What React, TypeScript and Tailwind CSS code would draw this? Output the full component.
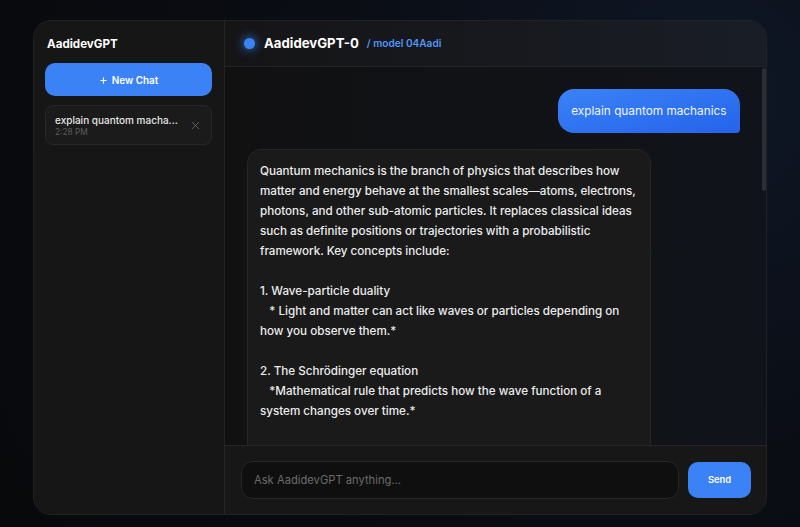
import { Plus, X } from 'lucide-react';

const reply = `Quantum mechanics is the branch of physics that describes how matter and energy behave at the smallest scales—atoms, electrons, photons, and other sub-atomic particles. It replaces classical ideas such as definite positions or trajectories with a probabilistic framework. Key concepts include:

1. Wave-particle duality
   * Light and matter can act like waves or particles depending on how you observe them.*

2. The Schrödinger equation
   *Mathematical rule that predicts how the wave function of a system changes over time.*`;

export default function App() {
  return (
    <div className="h-[527px] w-[800px] overflow-hidden bg-[radial-gradient(circle_at_88%_18%,#0f1726_0%,#0a0d14_45%,#08090b_100%)] pt-5 pl-[33px] font-['Inter',sans-serif]">
      <div className="flex h-[495px] w-[734px] overflow-hidden rounded-[18px] border border-[#212225] bg-[#151516]">
        <aside className="flex w-[191px] shrink-0 flex-col border-r border-[#232427] bg-[#161617] pt-[15px] pr-[12px] pl-[11px]">
          <h1 className="pl-[2px] text-[11.6px] leading-[16px] font-bold text-white">AadidevGPT</h1>
          <button className="mt-[11px] flex h-[33px] items-center justify-center gap-[4px] rounded-[10px] bg-[#3b82f6] pt-[1px] text-[9.9px] font-semibold text-white">
            <Plus size={9} strokeWidth={3} />
            New Chat
          </button>
          <div className="mt-[9px] flex h-[40px] items-center justify-between rounded-[8px] border border-[#27282b] bg-[#1b1b1c] pr-[9px] pl-[9px]">
            <div className="pt-[2px]">
              <p className="text-[10px] leading-[13px] font-medium text-[#e5e5e5]">explain quantom macha...</p>
              <p className="text-[8.3px] leading-[11px] text-[#5c5c5c]">2:28 PM</p>
            </div>
            <X size={13} strokeWidth={1.3} className="text-[#777777]" />
          </div>
        </aside>

        <main className="relative flex min-w-0 flex-1 flex-col">
          <header className="flex h-[46px] shrink-0 items-center border-b border-[#212327] bg-gradient-to-r from-[#151516] to-[#191d26] pl-[19px]">
            <span className="h-[11px] w-[11px] rounded-full bg-[#3b82f6] shadow-[0_0_8px_2px_rgba(59,130,246,0.55)]" />
            <span className="ml-[9px] text-[13.2px] font-bold text-white">AadidevGPT-0</span>
            <span className="ml-[8px] text-[10.1px] font-semibold text-[#5096fa]">/ model 04Aadi</span>
          </header>

          <div className="min-h-0 flex-1 overflow-hidden bg-gradient-to-r from-[#111112] to-[#10131a] pt-[22px] pr-[26px] pl-[22px]">
            <div className="flex justify-end">
              <div className="rounded-[16px] rounded-br-[4px] bg-gradient-to-br from-[#3b82f6] to-[#2563eb] px-[13.5px] py-[13px] text-[11.8px] leading-[18px] text-[#f0f5ff]">
                explain quantom machanics
              </div>
            </div>
            <div className="mt-[16px] w-[404px] rounded-t-[14px] border border-[#242528] bg-[#1a1a1b] px-[12px] pt-[11px] pb-[40px]">
              <p className="text-[11.65px] leading-[20px] font-medium whitespace-pre-wrap text-[#ececec]">{reply}</p>
            </div>
          </div>

          <div className="flex h-[69px] shrink-0 items-center gap-[9px] border-t border-[#242528] bg-[#171718] pr-[15px] pl-[16px]">
            <div className="flex h-[38px] flex-1 items-center rounded-[12px] border border-[#27282a] bg-[#0f0f10] pl-[12px] text-[11.2px] text-[#6b6b6b]">
              Ask AadidevGPT anything...
            </div>
            <button className="h-[36px] w-[63px] rounded-[10px] bg-[#3b82f6] text-[9.4px] font-semibold text-white">Send</button>
          </div>

          <div className="absolute top-[47px] right-0 h-[123px] w-[4px] rounded-full bg-[#2a2e37]" />
        </main>
      </div>
    </div>
  );
}
